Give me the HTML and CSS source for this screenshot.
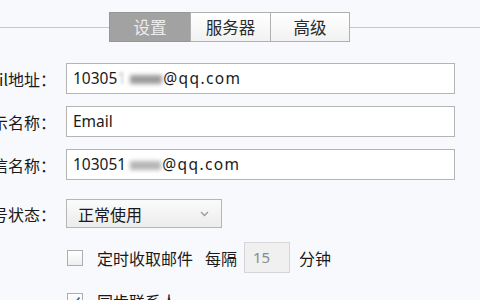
FILE: index.html
```html
<!DOCTYPE html>
<html>
<head>
  <meta charset="UTF-8">
  <title>帐号设置</title>
  <link rel="stylesheet" href="styles.css">
</head>
<body>

<div class="tabBar">
  <div class="tabLine lineLeft"></div>
  <div class="tab active">设置</div>
  <div class="tab">服务器</div>
  <div class="tab last">高级</div>
  <div class="tabLine lineRight"></div>
</div>

<div class="form">
  <div class="row">
    <span class="label">Email地址：</span>
    <div class="field">10305<span class="blurLight">1</span><span class="blurDark"></span><span class="domain">@qq.com</span></div>
  </div>
  <div class="row">
    <span class="label">显示名称：</span>
    <div class="field">Email</div>
  </div>
  <div class="row">
    <span class="label">发信名称：</span>
    <div class="field">103051<span class="blurDark short"></span><span class="domain">@qq.com</span></div>
  </div>
  <div class="row selectRow">
    <span class="label">帐号状态：</span>
    <div class="select">
      <span>正常使用</span>
      <svg class="chevron" width="9" height="6" viewBox="0 0 9 6"><path d="M1 1 L4.5 4.5 L8 1" fill="none" stroke="#9a9a9a" stroke-width="1.3"/></svg>
    </div>
  </div>
  <div class="row checkRow">
    <span class="check"></span>
    <span class="checkText">定时收取邮件</span>
    <span class="every">每隔</span>
    <div class="minutes">15</div>
    <span class="unit">分钟</span>
  </div>
  <div class="row checkRow second">
    <span class="check checked">
      <svg width="14" height="14" viewBox="0 0 14 14"><path d="M3 7 L6 10 L11.5 3.5" fill="none" stroke="#2f6fc4" stroke-width="1.8"/></svg>
    </span>
    <span class="checkText">同步联系人</span>
  </div>
</div>

</body>
</html>
```

FILE: styles.css
```css
body {
  margin: 0;
  height: 300px;
  background: #f8f9fc;
  color: #1a1a1a;
  font-family: "Noto Sans", "Noto Sans CJK SC", sans-serif;
  font-size: 16px;
  overflow: hidden;
}

.tabBar {
  display: flex;
  align-items: center;
  margin-top: 12px;
  height: 30px;
}

.tabLine {
  height: 1px;
  background: #c6c8cc;
}

.lineLeft {
  width: 109px;
}

.lineRight {
  flex: 1;
}

.tab {
  box-sizing: border-box;
  width: 80px;
  height: 30px;
  line-height: 28px;
  text-align: center;
  border: 1px solid #b0b0b0;
  border-right: none;
  background: linear-gradient(#ffffff, #f1f1f1);
  color: #2a2a2a;
  font-family: "Noto Sans CJK SC", sans-serif;
  font-size: 16.5px;
}

.tab.last {
  border-right: 1px solid #b0b0b0;
}

.tab.active {
  width: 81px;
  background: #a2a2a2;
  border-color: #969696;
  color: #ececec;
}

.form {
  margin-left: -48px;
  margin-top: 21px;
}

.row {
  display: flex;
  align-items: center;
  margin-bottom: 12px;
}

.label {
  width: 104px;
  margin-right: 10px;
  text-align: right;
  white-space: nowrap;
  font-family: "Noto Sans CJK SC", sans-serif;
  font-size: 16px;
}

.field {
  box-sizing: border-box;
  width: 389px;
  height: 31px;
  line-height: 29px;
  padding-left: 6px;
  border: 1px solid #b4b4b4;
  background: #fff;
  font-size: 15.5px;
  white-space: nowrap;
}

.domain {
  letter-spacing: 1.4px;
}

.blurLight {
  color: #c4c4c4;
  filter: blur(1.5px);
  margin-right: 4px;
}

.blurDark {
  display: inline-block;
  width: 32px;
  height: 9px;
  margin-right: 1px;
  background: #9b9b9b;
  filter: blur(2px);
  vertical-align: middle;
}

.blurDark.short {
  width: 31px;
  margin-left: 4px;
  background: #b5b5b5;
}

.selectRow {
  margin-top: 19px;
  margin-bottom: 14px;
}

.select {
  box-sizing: border-box;
  width: 156px;
  height: 29px;
  display: flex;
  align-items: center;
  justify-content: space-between;
  padding: 0 12px 0 11px;
  border: 1px solid #b6b6b6;
  background: linear-gradient(#fbfbfb, #ececec);
  font-family: "Noto Sans CJK SC", sans-serif;
  font-size: 16px;
}

.checkRow {
  padding-left: 115px;
  height: 31px;
  font-family: "Noto Sans CJK SC", sans-serif;
  font-size: 16px;
}

.checkRow.second {
  margin-top: 7px;
  margin-bottom: 0;
}

.check {
  box-sizing: border-box;
  width: 16px;
  height: 16px;
  border: 1px solid #adadad;
  background: linear-gradient(#ffffff, #eeeeee);
  margin-right: 14px;
  display: flex;
  align-items: center;
  justify-content: center;
}

.checkText {
  margin-right: 12px;
}

.every {
  margin-right: 7px;
}

.minutes {
  box-sizing: border-box;
  width: 46px;
  height: 31px;
  line-height: 29px;
  padding-left: 8px;
  border: 1px solid #d6d6d6;
  background: #f0f0f0;
  color: #8a8a8a;
  font-family: "Noto Sans", sans-serif;
  font-size: 15px;
  margin-right: 9px;
}
```
